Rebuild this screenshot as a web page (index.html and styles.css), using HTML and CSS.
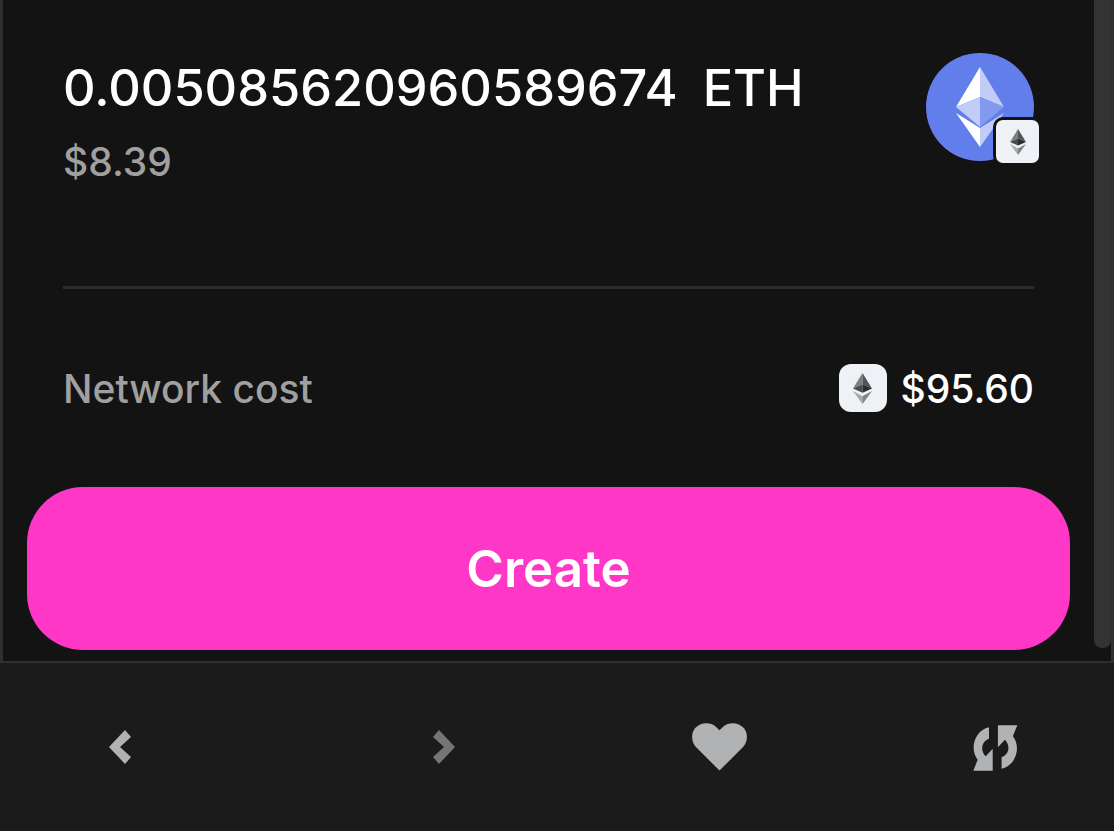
FILE: index.html
```html
<!DOCTYPE html>
<html>
  <head>
    <title>Create position</title>
    <link rel="stylesheet" href="styles.css">
  </head>
  <body>
    <svg class="defs" width="0" height="0">
      <symbol id="eth" viewBox="0 0 32 52">
        <polygon points="16,0 16,19 0,26" fill="#7d7d7d"/>
        <polygon points="16,0 32,26 16,19" fill="#555"/>
        <polygon points="16,19 16,33 0,26" fill="#4c4c4c"/>
        <polygon points="16,19 32,26 16,33" fill="#2b2b2b"/>
        <polygon points="0,30 16,39 16,52" fill="#a8a8a8"/>
        <polygon points="32,30 16,39 16,52" fill="#808080"/>
      </symbol>
    </svg>

    <div class="screen">
      <main class="panel">
        <section class="amount-row">
          <div>
            <div class="amount"><span>0.005085620960589674</span><span>ETH</span></div>
            <div class="fiat">$8.39</div>
          </div>
          <div class="token">
            <svg class="token-logo" viewBox="0 0 108 108">
              <circle cx="54" cy="54" r="54" fill="#627eea"/>
              <polygon points="54,14 54,44 30,54" fill="#fff"/>
              <polygon points="54,14 78,54 54,44" fill="#c1cdf6"/>
              <polygon points="54,44 54,74 30,54" fill="#c1cdf6"/>
              <polygon points="54,44 78,54 54,74" fill="#8199ee"/>
              <polygon points="30,60 54,75 54,94" fill="#fff"/>
              <polygon points="78,60 54,75 54,94" fill="#c1cdf6"/>
            </svg>
            <div class="chain-badge"><svg class="eth-small"><use href="#eth"/></svg></div>
          </div>
        </section>

        <hr class="divider">

        <section class="cost-row">
          <span class="cost-label">Network cost</span>
          <span class="cost-value">
            <span class="chain-icon"><svg class="eth-mid"><use href="#eth"/></svg></span>
            $95.60
          </span>
        </section>

        <button class="create-button">Create</button>
        <div class="scroll-thumb"></div>
      </main>

      <footer class="toolbar">
        <svg class="tool tool-back" viewBox="0 0 22 34"><polygon points="16,0 22,7 11,17 22,27 16,34 0,17" fill="#b1b2b4"/></svg>
        <svg class="tool tool-forward" viewBox="0 0 22 34"><polygon points="6,0 0,7 11,17 0,27 6,34 22,17" fill="#757575"/></svg>
        <svg class="tool tool-heart" viewBox="0 0 56 48"><path d="M28 48 L4 24 C-1 19 -1 10 3 5 C8 -1 18 -2 24 3 L28 7 L32 3 C38 -2 48 -1 53 5 C57 10 57 19 52 24 Z" fill="#b1b2b4"/></svg>
        <svg class="tool tool-refresh" viewBox="0 0 47 48">
          <path d="M16 3.3 L16 14.7 C9 17 6.5 26 12.7 32.3 L19.7 24.7 L19.7 46.7 L0.3 46.7 L4.7 35.7 C-4 25 2 6 16 3.3 Z" fill="#b1b2b4"/>
          <path d="M16 3.3 L16 14.7 C9 17 6.5 26 12.7 32.3 L19.7 24.7 L19.7 46.7 L0.3 46.7 L4.7 35.7 C-4 25 2 6 16 3.3 Z" fill="#b1b2b4" transform="rotate(180 22.3 24)"/>
        </svg>
      </footer>
    </div>
  </body>
</html>
```

FILE: styles.css
```css
html, body {
  margin: 0;
  padding: 0;
  background-color: #1b1b1b;
  overflow: hidden;
}

body {
  font-family: Inter, "Liberation Sans", sans-serif;
  font-weight: 500;
}

.defs {
  position: absolute;
}

.screen {
  display: flex;
  flex-direction: column;
  height: 831px;
}

.panel {
  position: relative;
  box-sizing: border-box;
  height: 663px;
  background-color: #131313;
  border-left: 3px solid #2f2f2f;
  border-right: 3px solid #2f2f2f;
  border-bottom: 2px solid #2f2f2f;
  padding: 53px 0 0;
}

.amount-row {
  display: flex;
  justify-content: space-between;
  margin: 0 77px 0 60px;
  height: 108px;
}

.amount {
  display: flex;
  gap: 25px;
  color: #fff;
  font-size: 50.5px;
  line-height: 72px;
  margin-top: -1px;
}

.fiat {
  color: #a0a0a0;
  font-size: 39px;
  line-height: 48px;
  margin-top: 14px;
}

.token {
  position: relative;
  width: 108px;
  height: 108px;
}

.token-logo {
  display: block;
  width: 108px;
  height: 108px;
}

.chain-badge {
  position: absolute;
  right: -8px;
  bottom: -5px;
  display: flex;
  align-items: center;
  justify-content: center;
  width: 43px;
  height: 43px;
  background-color: #eef1f6;
  border-radius: 10px;
  border: 3px solid #131313;
}

.eth-small {
  width: 16px;
  height: 26px;
}

.divider {
  margin: 125px 77px 0 60px;
  height: 3px;
  border: none;
  background-color: #2c2c2c;
}

.cost-row {
  display: flex;
  align-items: center;
  justify-content: space-between;
  margin: 74px 77px 0 60px;
  height: 50px;
}

.cost-label {
  color: #a0a0a0;
  font-size: 39px;
}

.cost-value {
  display: flex;
  align-items: center;
  gap: 14px;
  color: #fff;
  font-size: 39px;
}

.chain-icon {
  display: flex;
  align-items: center;
  justify-content: center;
  width: 48px;
  height: 48px;
  background-color: #eef1f6;
  border-radius: 12px;
}

.eth-mid {
  width: 19px;
  height: 31px;
}

.create-button {
  display: block;
  width: 1043px;
  height: 163px;
  margin: 74px 0 0 24px;
  background-color: #ff37c7;
  color: #fff;
  font-family: inherit;
  font-size: 51px;
  font-weight: 600;
  border: none;
  border-radius: 56px;
}

.scroll-thumb {
  position: absolute;
  top: 0;
  right: 0;
  width: 17px;
  height: 648px;
  background-color: #333;
  border-radius: 0 0 8px 8px;
}

.toolbar {
  position: relative;
  flex: 1;
  background-color: #1b1b1b;
}

/* toolbar icons sit at uneven spots, matches the browser chrome */
.tool {
  position: absolute;
}

.tool-back {
  left: 109px;
  top: 67px;
  width: 22px;
  height: 34px;
}

.tool-forward {
  left: 433px;
  top: 67px;
  width: 22px;
  height: 34px;
}

.tool-heart {
  left: 692px;
  top: 60px;
  width: 55px;
  height: 48px;
}

.tool-refresh {
  left: 973px;
  top: 61px;
  width: 47px;
  height: 48px;
}
```
